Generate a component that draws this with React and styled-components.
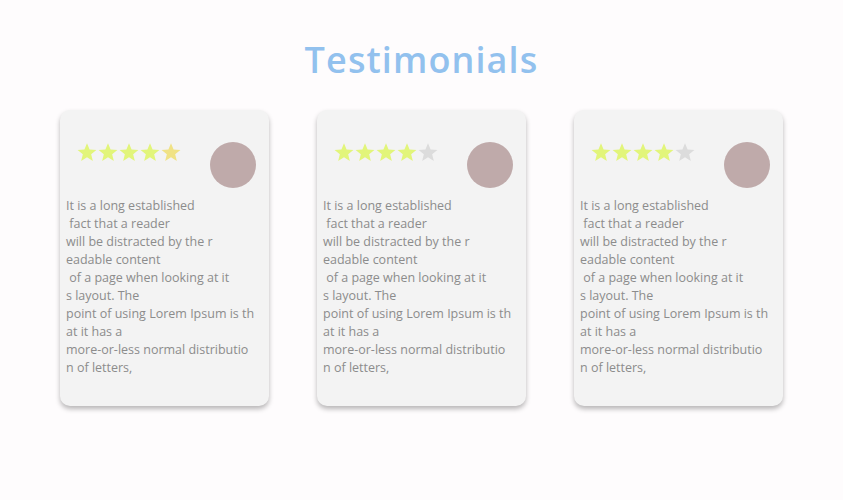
import React from "react"
import styled, { createGlobalStyle } from "styled-components"

const GlobalStyle = createGlobalStyle`
  body {
    margin: 0;
    background: #fefcfd;
    font-family: "Open Sans", "Liberation Sans", sans-serif;
  }
`

const Page = styled.main`
  width: 843px;
  height: 500px;
  display: flex;
  flex-direction: column;
  align-items: center;
`

const Title = styled.h1`
  margin: 35px 0 0;
  height: 75px;
  font-family: "Open Sans", "Lato", sans-serif;
  font-weight: 600;
  font-size: 36px;
  letter-spacing: 1.1px;
  color: #92c1ee;
`

const Cards = styled.section`
  display: flex;
  gap: 48px;
`

const Card = styled.article`
  width: 209px;
  height: 296px;
  box-sizing: border-box;
  padding: 32px 13px 0 6px;
  background: #f3f3f3;
  border-radius: 10px;
  box-shadow: 0 3px 5px rgba(0, 0, 0, 0.28);
`

const Head = styled.div`
  display: flex;
  justify-content: space-between;
  align-items: flex-start;
  height: 55px;
`

const Stars = styled.div`
  display: flex;
  gap: 1px;
  margin: 0 0 0 11px;
`

const Avatar = styled.div`
  width: 46px;
  height: 46px;
  border-radius: 50%;
  background: #bfaaaa;
`

const Text = styled.p`
  margin: 0;
  font-size: 12.5px;
  line-height: 18px;
  color: #8c8c8c;
  white-space: pre;
`

const Star = ({ color }) => (
  <svg width="20" height="20" viewBox="0 0 24 24">
    <path
      fill={color}
      d="M12 1.5l3.1 7.6 8.2.5-6.3 5.2 2 8-7-4.4-7 4.4 2-8L.7 9.6l8.2-.5z"
    />
  </svg>
)

const lines = [
  "It is a long established",
  " fact that a reader",
  "will be distracted by the r",
  "eadable content",
  " of a page when looking at it",
  "s layout. The",
  "point of using Lorem Ipsum is th",
  "at it has a",
  "more-or-less normal distributio",
  "n of letters,",
]

const testimonials = [
  { id: 1, stars: ["#e2f57a", "#e2f57a", "#e2f57a", "#e2f57a", "#f0e285"] },
  { id: 2, stars: ["#e2f57a", "#e2f57a", "#e2f57a", "#e2f57a", "#dcdcdc"] },
  { id: 3, stars: ["#e2f57a", "#e2f57a", "#e2f57a", "#e2f57a", "#dcdcdc"] },
]

const App = () => {
  return (
    <Page>
      <GlobalStyle />
      <Title>Testimonials</Title>
      <Cards>
        {testimonials.map((item) => (
          <Card key={item.id}>
            <Head>
              <Stars>
                {item.stars.map((c, i) => (
                  <Star key={i} color={c} />
                ))}
              </Stars>
              <Avatar />
            </Head>
            <Text>{lines.join("\n")}</Text>
          </Card>
        ))}
      </Cards>
    </Page>
  )
}

export default App
